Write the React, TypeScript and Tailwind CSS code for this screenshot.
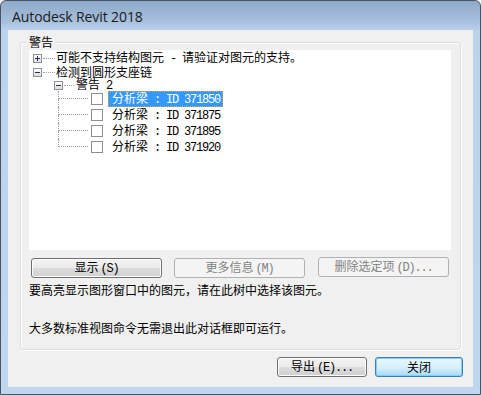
import React from 'react';

const cjk = '"Noto Sans CJK SC", "Noto Sans", sans-serif';

// ASCII in the dialog is drawn at 6px per character, like SimSun
function M({ children }: { children: React.ReactNode }) {
  return <span className="font-['Liberation_Mono',monospace] tracking-[-1.2px]">{children}</span>;
}

function Key({ k }: { k: string }) {
  return (
    <span className="ml-[2px]">
      <M>({k})</M>
    </span>
  );
}

function ExpandBox({ open }: { open: boolean }) {
  return (
    <div className="relative w-[9px] h-[9px] border border-[#919191] bg-gradient-to-b from-white to-[#dcdcdc] shrink-0">
      <div className="absolute left-[1px] top-[3px] w-[5px] h-px bg-[#1f2f6e]" />
      {!open && <div className="absolute left-[3px] top-[1px] w-px h-[5px] bg-[#1f2f6e]" />}
    </div>
  );
}

function LeafRow({ id, selected, last }: { id: string; selected?: boolean; last?: boolean }) {
  return (
    <div className="flex h-[16px] items-center">
      <div className="ml-[29px] w-[30px] h-full flex flex-col shrink-0">
        <div className="h-[8px] border-l border-b border-dotted border-[#a0a0a0]" />
        <div className={`h-[8px] ${last ? '' : 'border-l border-dotted border-[#a0a0a0]'}`} />
      </div>
      <div className="ml-[3px] w-[12px] h-[12px] border border-[#8e8f8f] bg-white shrink-0" />
      <div
        className={`ml-[5px] h-[16px] flex items-center pl-[4px] pr-[3px] ${
          selected ? 'bg-[#3399ff] text-white outline-1 outline-dotted outline-[#e8a048] -outline-offset-1' : 'text-black'
        }`}
      >
        <span>
          分析梁<M> : ID {id}</M>
        </span>
      </div>
    </div>
  );
}

function Button({
  children,
  w,
  disabled,
  primary,
}: {
  children: React.ReactNode;
  w: string;
  disabled?: boolean;
  primary?: boolean;
}) {
  const base = 'h-[20px] rounded-[3px] flex items-center justify-center text-[12px] leading-none shrink-0';
  if (disabled) {
    return <div className={`${base} ${w} border border-[#adb2b5] bg-[#f4f4f4] text-[#838383]`}><span>{children}</span></div>;
  }
  if (primary) {
    return (
      <div
        className={`${base} ${w} border border-[#3c7fb1] text-black bg-gradient-to-b from-[#ebf6fd] via-[#d9f0fc] to-[#a7d9f5] shadow-[inset_0_0_0_1px_#7fd0f3]`}
      >
        <span>{children}</span>
      </div>
    );
  }
  return (
    <div
      className={`${base} ${w} border border-[#707070] text-black bg-[linear-gradient(#f2f2f2_0%,#ebebeb_50%,#dddddd_51%,#cfcfcf_100%)] shadow-[inset_0_0_0_1px_#fcfcfc]`}
    >
      <span>{children}</span>
    </div>
  );
}

export default function App() {
  return (
    <div
      className="w-[481px] h-[395px] rounded-t-[6px] border border-[#4b5360] bg-[linear-gradient(#8ea9c9_0px,#a6bfdc_20px,#bcd3ec_30px,#bfd6ee_100%)] flex flex-col overflow-hidden"
      style={{ fontFamily: cjk }}
    >
      {/* Title bar */}
      <div className="h-[29px] shrink-0 flex items-center pl-[11px] pt-[1px]">
        <span className="text-[14px] text-[#1b1b1b] font-['Open_Sans',sans-serif] tracking-[-0.1px]">Autodesk Revit 2018</span>
      </div>

      {/* Client area */}
      <div className="mx-[7px] mb-[7px] flex-1 bg-[#f0f0f0] flex flex-col">
        {/* Group box */}
        <div className="relative mt-[12px] mx-[12px] h-[308px] border border-[#d5dfe5] rounded-[3px] shadow-[1px_1px_0_#ffffff,inset_1px_1px_0_#ffffff] pt-[7px] pl-[8px] pr-[9px]">
          <div className="absolute left-[6px] -top-[9px] px-[2px] bg-[#f0f0f0] text-[12px] leading-[16px] text-black">警告</div>

          {/* Tree */}
          <div className="h-[200px] bg-white pt-[1px] text-[12px] leading-[12px]">
            <div className="flex h-[14px] items-center">
              <div className="ml-[4px]">
                <ExpandBox open={false} />
              </div>
              <div className="ml-[1px] w-[12px] border-t border-dotted border-[#a0a0a0]" />
              <div className="ml-[1px] text-black">
                可能不支持结构图元<M> - </M>请验证对图元的支持。
              </div>
            </div>
            <div className="flex h-[14px] items-center">
              <div className="ml-[4px]">
                <ExpandBox open />
              </div>
              <div className="ml-[1px] w-[12px] border-t border-dotted border-[#a0a0a0]" />
              <div className="ml-[1px] text-black">检测到圆形支座链</div>
            </div>
            <div className="flex h-[12px] items-center">
              <div className="ml-[25px]">
                <ExpandBox open />
              </div>
              <div className="ml-[1px] w-[10px] border-t border-dotted border-[#a0a0a0]" />
              <div className="ml-[2px] text-black">
                警告<M> 2</M>
              </div>
            </div>
            <LeafRow id="371850" selected />
            <LeafRow id="371875" />
            <LeafRow id="371895" />
            <LeafRow id="371920" last />
          </div>

          {/* Buttons */}
          <div className="flex mt-[8px] pl-[2px]">
            <Button w="w-[131px]">
              显示<Key k="S" />
            </Button>
            <div className="ml-[12px]">
              <Button w="w-[131px]" disabled>
                更多信息<Key k="M" />
              </Button>
            </div>
            <div className="ml-[13px] -mt-[1px]">
              <Button w="w-[131px]" disabled>
                删除选定项<Key k="D" />
                <M>...</M>
              </Button>
            </div>
          </div>

          <div className="mt-[5px] text-[12px] leading-[14px] text-black">要高亮显示图形窗口中的图元，请在此树中选择该图元。</div>
          <div className="mt-[24px] text-[12px] leading-[14px] text-black">大多数标准视图命令无需退出此对话框即可运行。</div>
        </div>

        {/* Footer buttons */}
        <div className="flex justify-end mt-[7px] pr-[10px]">
          <Button w="w-[90px]">
            导出<Key k="E" />
            <M>...</M>
          </Button>
          <div className="ml-[8px]">
            <Button w="w-[88px]" primary>
              关闭
            </Button>
          </div>
        </div>
      </div>
    </div>
  );
}
